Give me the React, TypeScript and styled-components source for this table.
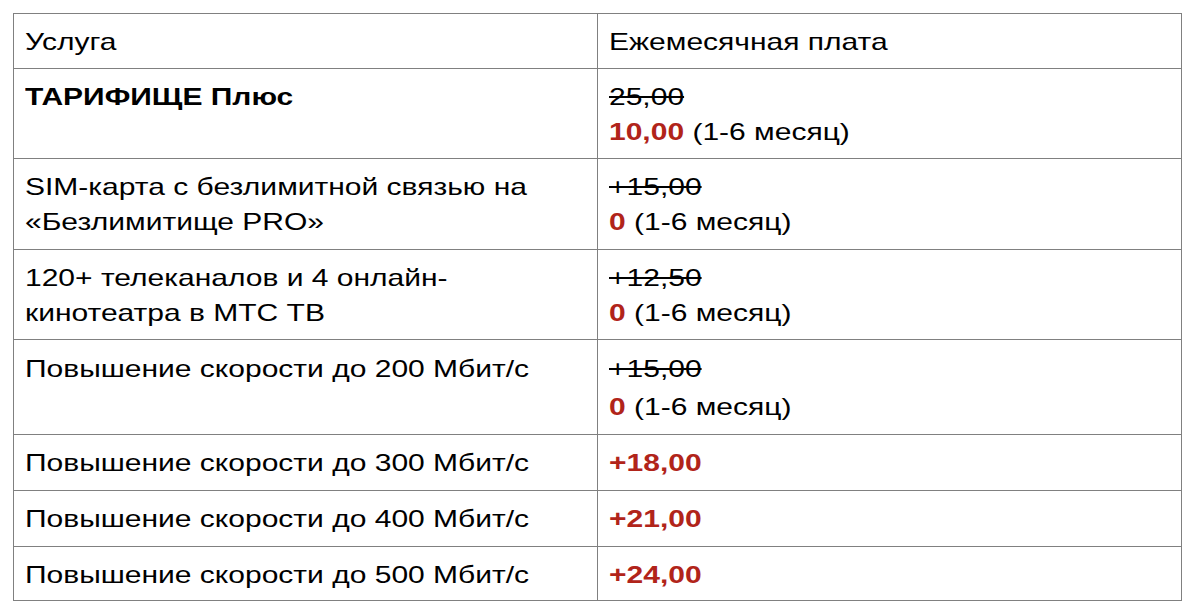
import React from "react";
import styled, { createGlobalStyle } from "styled-components";

const GlobalStyle = createGlobalStyle`
  html, body {
    margin: 0;
    padding: 0;
    background: #fff;
  }
  body {
    font-family: "Liberation Sans", Arial, Helvetica, sans-serif;
    color: #000;
  }
`;

const Page = styled.div({
  padding: "13px",
});

const Table = styled.div({
  display: "grid",
  gridTemplateColumns: "584px 584px",
  width: "1169px",
  borderTop: "1px solid #808080",
  borderLeft: "1px solid #808080",
  boxSizing: "border-box",
});

const Cell = styled.div<{ $pt?: number; $pb?: number }>`
  box-sizing: border-box;
  padding: ${(p) => p.$pt ?? 10}px 11px ${(p) => p.$pb ?? 9}px 11px;
  border-right: 1px solid #808080;
  border-bottom: 1px solid #808080;
  font-size: 24px;
  line-height: 35px;
  overflow: hidden;
`;

// the reference text is set wider than Arial, so each line is stretched a little
const Line = styled.div<{ $gap?: number }>`
  margin-top: ${(p) => p.$gap ?? 0}px;
  white-space: nowrap;
  transform: scaleX(1.25);
  transform-origin: 0 0;
`;

const Bold = styled.span({
  fontWeight: 700,
});

const Old = styled.span({
  textDecoration: "line-through",
});

const Red = styled.span({
  color: "#b1241a",
  fontWeight: 700,
});

type Row = {
  service: string[];
  bold?: boolean;
  old?: string;
  now: string;
  note?: string;
  pt?: number;
  pb?: number;
  gap?: number;
};

const rows: Row[] = [
  { service: ["ТАРИФИЩЕ Плюс"], bold: true, old: "25,00", now: "10,00", note: " (1-6 месяц)" },
  {
    service: ["SIM-карта с безлимитной связью на", "«Безлимитище PRO»"],
    old: "+15,00",
    now: "0",
    note: " (1-6 месяц)",
    pb: 10,
  },
  {
    service: ["120+ телеканалов и 4 онлайн-", "кинотеатра в МТС ТВ"],
    old: "+12,50",
    now: "0",
    note: " (1-6 месяц)",
  },
  {
    service: ["Повышение скорости до 200 Мбит/с"],
    old: "+15,00",
    now: "0",
    note: " (1-6 месяц)",
    pt: 11,
    pb: 10,
    gap: 3,
  },
  { service: ["Повышение скорости до 300 Мбит/с"], now: "+18,00", pb: 10 },
  { service: ["Повышение скорости до 400 Мбит/с"], now: "+21,00", pb: 10 },
  { service: ["Повышение скорости до 500 Мбит/с"], now: "+24,00", pb: 8 },
];

export default function App() {
  return (
    <Page>
      <GlobalStyle />
      <Table>
        <Cell>
          <Line>Услуга</Line>
        </Cell>
        <Cell>
          <Line>Ежемесячная плата</Line>
        </Cell>
        {rows.map((row, i) => (
          <React.Fragment key={i}>
            <Cell $pt={row.pt} $pb={row.pb}>
              {row.service.map((text) => (
                <Line key={text}>{row.bold ? <Bold>{text}</Bold> : text}</Line>
              ))}
            </Cell>
            <Cell $pt={row.pt} $pb={row.pb}>
              {row.old && (
                <Line>
                  <Old>{row.old}</Old>
                </Line>
              )}
              <Line $gap={row.old ? row.gap : 0}>
                <Red>{row.now}</Red>
                {row.note}
              </Line>
            </Cell>
          </React.Fragment>
        ))}
      </Table>
    </Page>
  );
}
